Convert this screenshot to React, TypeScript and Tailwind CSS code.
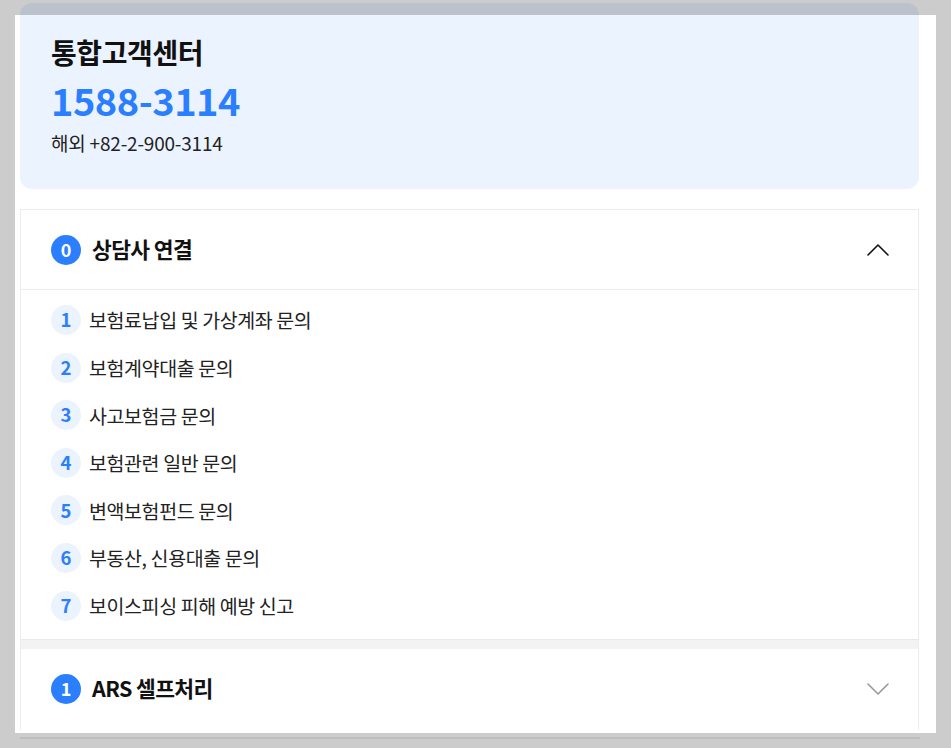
const items = [
  "보험료납입 및 가상계좌 문의",
  "보험계약대출 문의",
  "사고보험금 문의",
  "보험관련 일반 문의",
  "변액보험펀드 문의",
  "부동산, 신용대출 문의",
  "보이스피싱 피해 예방 신고",
];

function Chevron({ up, color }: { up: boolean; color: string }) {
  return (
    <svg width="22" height="12" viewBox="0 0 22 12" fill="none" className={color}>
      <polyline
        points={up ? "1,11 11,1 21,11" : "1,1 11,11 21,1"}
        stroke="currentColor"
        strokeWidth="1.6"
        strokeLinecap="round"
        strokeLinejoin="round"
      />
    </svg>
  );
}

export default function App() {
  return (
    <div
      className="min-h-screen bg-[#cccccc] pt-[15px] text-[#111]"
      style={{ fontFamily: '"Noto Sans CJK KR", "Noto Sans", sans-serif' }}
    >
      <div className="ml-[15px] flow-root h-[718px] w-[921px] bg-white pl-[5px] pr-[17px]">
        <div className="-mt-[12px] h-[727px] overflow-hidden">
          {/* contact card */}
          <div className="h-[186px] rounded-[12px] bg-[linear-gradient(to_bottom,#bcc2cc_12px,#ebf3ff_12px)] pl-[31px] pt-[30px]">
            <h1 className="text-[28px] font-bold leading-[38px] tracking-[-0.4px] text-[#111]">
              통합고객센터
            </h1>
            <p className="mt-[5px] text-[38px] font-bold leading-[48px] tracking-[-0.5px] text-[#2b7fff]">
              1588-3114
            </p>
            <p className="mt-[6px] text-[19px] leading-[26px] tracking-[-0.2px] text-[#222]">
              해외 +82-2-900-3114
            </p>
          </div>

          {/* accordion */}
          <div className="mt-[20px] border border-[#ececec]">
            <div className="flex h-[80px] items-center justify-between border-b border-[#ececec] pl-[30px] pr-[29px]">
              <div className="flex items-center gap-[11px]">
                <span className="flex h-[30px] w-[30px] items-center justify-center rounded-full bg-[#2b7fff] text-[18px] font-bold text-white">
                  0
                </span>
                <span className="text-[21.5px] font-bold tracking-[-0.6px] text-[#111]">
                  상담사 연결
                </span>
              </div>
              <Chevron up color="text-[#111]" />
            </div>

            <ul className="flex flex-col gap-[17.6px] pb-[18px] pl-[30px] pt-[15px]">
              {items.map((label, i) => (
                <li key={label} className="flex h-[30px] items-center gap-[8px]">
                  <span className="flex h-[30px] w-[30px] items-center justify-center rounded-full bg-[#ebf3ff] text-[18.5px] font-bold text-[#2b7fff]">
                    {i + 1}
                  </span>
                  <span className="text-[19.5px] tracking-[-0.4px] text-[#222]">{label}</span>
                </li>
              ))}
            </ul>

            <div className="h-[10px] border-t border-[#e8e8e8] bg-[#f3f3f3]" />

            <div className="flex h-[80px] items-center justify-between pl-[30px] pr-[29px]">
              <div className="flex items-center gap-[11px]">
                <span className="flex h-[30px] w-[30px] items-center justify-center rounded-full bg-[#2b7fff] text-[18px] font-bold text-white">
                  1
                </span>
                <span className="text-[21.5px] font-bold tracking-[-0.6px] text-[#111]">
                  ARS 셀프처리
                </span>
              </div>
              <Chevron up={false} color="text-[#999]" />
            </div>
            <div className="h-[40px]" />
          </div>
        </div>
      </div>
      <div className="ml-[20px] mt-[4px] h-[2px] w-[900px] bg-[#bdbdbd]" />
    </div>
  );
}
